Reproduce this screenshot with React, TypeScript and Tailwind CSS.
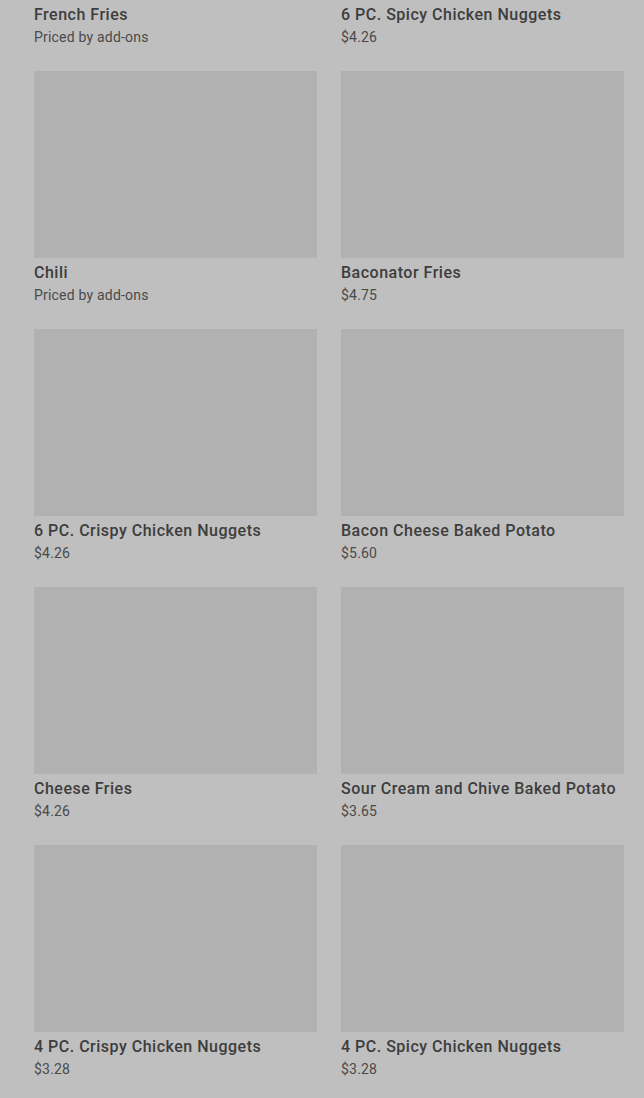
const items = [
  { name: "French Fries", price: "Priced by add-ons" },
  { name: "6 PC. Spicy Chicken Nuggets", price: "$4.26" },
  { name: "Chili", price: "Priced by add-ons" },
  { name: "Baconator Fries", price: "$4.75" },
  { name: "6 PC. Crispy Chicken Nuggets", price: "$4.26" },
  { name: "Bacon Cheese Baked Potato", price: "$5.60" },
  { name: "Cheese Fries", price: "$4.26" },
  { name: "Sour Cream and Chive Baked Potato", price: "$3.65" },
  { name: "4 PC. Crispy Chicken Nuggets", price: "$3.28" },
  { name: "4 PC. Spicy Chicken Nuggets", price: "$3.28" },
];

export default function App() {
  return (
    <div
      className="min-h-screen overflow-hidden bg-[#bfbfbf] pl-[34px] pr-[20px]"
      style={{ fontFamily: "Roboto, 'Liberation Sans', sans-serif" }}
    >
      <div className="-mt-[187px] grid grid-cols-2 gap-x-[24px] gap-y-[24px]">
        {items.map((item) => (
          <div key={item.name} className="flex flex-col">
            <div className="h-[187px] bg-[#b1b1b1]" />
            <p className="mt-[5px] truncate text-[16px] leading-[20px] font-medium tracking-[0.5px] text-[#3d3d3d]">
              {item.name}
            </p>
            <p className="mt-[2px] text-[14px] leading-[20px] tracking-[0.2px] text-[#4a4a4a]">{item.price}</p>
          </div>
        ))}
      </div>
    </div>
  );
}
